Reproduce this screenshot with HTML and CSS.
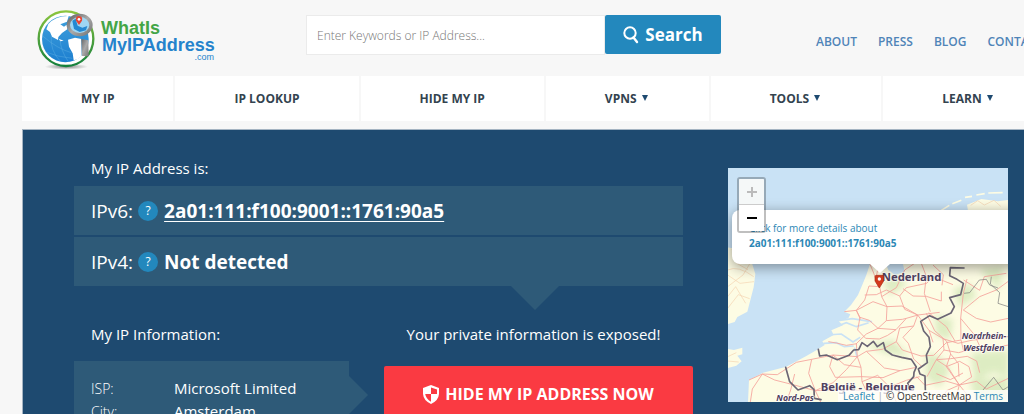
FILE: index.html
```html
<!DOCTYPE html>
<html lang="en">
<head>
<meta charset="utf-8">
<title>What Is My IP Address</title>
<link rel="stylesheet" href="styles.css">
</head>
<body>
<header class="top">
  <a class="logo" href="#" aria-label="WhatIsMyIPAddress.com">
    <svg class="logo-mark" viewBox="45 28 180 184" aria-hidden="true">
      <defs>
        <linearGradient id="ring" x1="0" y1="0" x2="0" y2="1"><stop offset="0" stop-color="#8bc53f"/><stop offset="1" stop-color="#15803c"/></linearGradient>
        <linearGradient id="sea" x1="0" y1="0" x2="0" y2="1"><stop offset="0" stop-color="#3fa0dc"/><stop offset="1" stop-color="#1d7fd0"/></linearGradient>
        <linearGradient id="steel" x1="0" y1="0" x2="1" y2="1"><stop offset="0" stop-color="#666"/><stop offset=".5" stop-color="#aaa"/><stop offset="1" stop-color="#777"/></linearGradient>
        <radialGradient id="shade"><stop offset="0" stop-color="#888"/><stop offset="1" stop-color="#888" stop-opacity="0"/></radialGradient>
      </defs>
      <ellipse cx="136" cy="203" rx="65" ry="9" fill="url(#shade)"/>
      <circle cx="135" cy="119" r="82" fill="#fff" stroke="url(#ring)" stroke-width="7"/>
      <circle cx="133" cy="120" r="70" fill="url(#sea)"/>
      <path d="M82 75Q105 50 143 51L138 68 118 76 129 83 137 77 139 91 123 102 112 114 111 123 93 113 87 99 76 91Z" fill="#fff"/>
      <path d="M113 119L128 125 118 127ZM141 122L162 116 181 120 182 171 170 181 158 184 155 163 144 143Z" fill="#fff"/>
      <g fill="none" stroke="#6fbcea" stroke-width="1"><path d="M65 111Q110 150 151 161M74 159Q110 174 154 178M91 109Q86 155 119 188M117 120Q119 155 142 188"/></g>
      <path d="M181 120L202 124 203 172 183 171Z" fill="url(#steel)"/>
      <ellipse cx="176" cy="78" rx="34" ry="29" fill="#9ed7f4" stroke="url(#steel)" stroke-width="10"/>
      <path d="M154 65L164 59 170 80 184 86 199 81 195 94 176 99 159 90Z" fill="#2489d2"/>
      <path d="M174 78L165 65Q162 51 174 51 186 52 183 65Z" fill="#e44736"/>
      <circle cx="174" cy="61" r="4" fill="#fff"/>
    </svg>
    <span class="logo-words">
      <span class="logo-green">WhatIs</span>
      <span class="logo-blue">MyIPAddress</span>
      <span class="logo-com">.com</span>
    </span>
  </a>
  <form class="search">
    <input class="search-box" type="text" aria-label="Keywords or IP address" placeholder="Enter Keywords or IP Address...">
    <button class="search-btn" type="button">
      <svg class="search-icon" viewBox="0 0 16 18" aria-hidden="true"><circle cx="7" cy="7" r="5.7" fill="none" stroke="currentColor" stroke-width="2"/><path d="M10.5 11.5L14 16" stroke="currentColor" stroke-width="2.4" stroke-linecap="round"/></svg>Search</button>
  </form>
  <nav class="links" aria-label="Site">
    <a href="#">ABOUT</a><a href="#">PRESS</a><a href="#">BLOG</a><a href="#">CONTACT</a>
  </nav>
</header>
<nav class="menu" aria-label="Main">
  <a href="#">MY IP</a>
  <a href="#">IP LOOKUP</a>
  <a href="#">HIDE MY IP</a>
  <a href="#">VPNS <svg class="caret" viewBox="0 0 6 6" aria-hidden="true"><path d="M0 0H6L3 6Z"/></svg></a>
  <a href="#">TOOLS <svg class="caret" viewBox="0 0 6 6" aria-hidden="true"><path d="M0 0H6L3 6Z"/></svg></a>
  <a href="#">LEARN <svg class="caret" viewBox="0 0 6 6" aria-hidden="true"><path d="M0 0H6L3 6Z"/></svg></a>
</nav>
<main class="hero">
  <section class="details">
    <h1 class="label">My IP Address is:</h1>
    <div class="addresses">
      <div class="address"><span>IPv6:</span><button class="help" type="button" aria-label="About IPv6">?</button><a class="value" href="#">2a01:111:f100:9001::1761:90a5</a></div>
      <div class="address"><span>IPv4:</span><button class="help" type="button" aria-label="About IPv4">?</button><span class="value">Not detected</span></div>
    </div>
    <div class="lower">
      <div class="info">
        <h2 class="label">My IP Information:</h2>
        <dl class="facts">
          <dt>ISP:</dt><dd>Microsoft Limited</dd>
          <dt>City:</dt><dd>Amsterdam</dd>
        </dl>
      </div>
      <div class="exposed">
        <p class="label">Your private information is exposed!</p>
        <a class="hide-btn" href="#"><svg class="shield" viewBox="0 0 16 19" aria-hidden="true"><path d="M8 0L16 3V9Q15.500 15.500 8 19 .5 15.500 0 9V3Z" fill="currentColor"/><path d="M8 2.500L14 4.500V9H8ZM8 9V16.700Q3 14 2.200 9Z" fill="#fa3a42"/></svg>HIDE MY IP ADDRESS NOW</a>
      </div>
    </div>
  </section>
  <aside class="map">
    <svg class="map-art" viewBox="24 24 842 702" preserveAspectRatio="xMidYMid slice" role="img" aria-label="Map of the Netherlands and Belgium">
      <defs><filter id="soft"><feGaussianBlur stdDeviation="9"/></filter>
      <clipPath id="land"><path id="coast" d="M455 300L440 345 428 374 415 405 394 435 374 455 392 463 386 475 357 484 370 496 335 511 342 525 308 544 315 555 295 568 260 588 200 620 130 638 88 660 85 726H866V120L835 124 785 117 742 134 745 152 720 310Z"/></clipPath></defs>
      <path fill="#c9e2f5" d="M0 0H900V750H0Z"/>
      <path fill="#fdfce4" d="M24 262L60 268 91 290 107 342 102 382 83 455 53 471 45 486 24 492ZM24 567L43 570 68 563 68 583 53 587 66 604 50 617 24 624Z"/>
      <use href="#coast" fill="#fdfce4"/>
      <g clip-path="url(#land)">
        <g fill="#d5e8ba" filter="url(#soft)" opacity=".8"><path d="M490 365L540 345 560 375 510 405ZM645 465L700 480 690 540 650 525ZM700 390L752 370 770 410 720 440ZM755 580L866 570V650L820 637 765 665ZM620 580L660 590 690 630 660 680 620 655ZM440 555L520 540 570 590 500 580ZM750 660L866 650V726H770ZM780 330L850 320 840 390Z"/></g>
      </g>
      <path d="M498 310L550 312 555 335 526 345 506 330Z" fill="#c9e2f5"/>
      <g fill="none" stroke="#c9e2f5" stroke-width="5" stroke-linecap="round"><path d="M340 503L380 488 410 500 445 489M320 525L365 522 400 546 420 533M313 550L350 548 374 560 400 558M355 482L398 476 455 485M405 565L412 590"/></g>
      <g fill="none" stroke="#fdfce4" stroke-width="5"><path d="M665 151L689 136M698 131L725 121M736 112L757 109M770 105L795 101M806 99L849 98"/></g>
      <g fill="none" stroke="#f5d3b0" stroke-width="2"><path d="M24 330Q55 315 102 350M24 345L61 370 103 365M24 380L70 345 91 310M24 410L48 380 78 430M24 445L56 404 90 416M37 267L51 310 85 329M24 590L50 578M24 603L57 606M753 136L774 122 794 135 823 121 843 139"/></g>
      <g fill="none" stroke="#f4a49c" stroke-width="2.600" stroke-linejoin="round"><path d="M477 313L470 350 480 380 486 410 502 440 500 482 475 505 440 522 410 551 413 590 424 622 427 665 440 693M480 380L448 378 435 420 410 451 421 472 449 481 475 505 529 509 560 475 595 465 660 457M435 405L470 404 500 390 540 408 560 383 621 370 640 350 700 374M540 408L555 448 594 465 582 498 540 504 530 545 548 570M502 440L547 438 594 465 628 511 640 547M486 410L530 383 555 330 585 310M550 386L580 408 620 409 665 423 665 395M582 498L550 532 566 550 582 597 607 620M410 451L460 425 502 440M421 472L414 510 438 535 479 537 504 526 529 509M530 545L488 568 440 574 413 590M450 310L462 339 475 378M500 482L548 478 560 475M605 310L620 349 614 400 632 455M374 455L410 451 422 478M326 545L350 549 380 556 412 551"/>
        <path d="M88 660L128 642 173 644 230 607 276 598 340 585 413 590M128 642L165 660 216 673 287 692 360 688 440 693 510 681 560 661 600 650M92 726L98 687 128 642M276 598L267 640 287 692 303 726M340 585L330 620 347 652 427 650 490 653 541 632 590 622M424 622L374 614 340 585M440 574L494 624 541 632M287 692L340 668 380 629 413 590M200 726L213 690 225 642M427 665L474 646 510 681 530 726M591 650L616 676 678 663 719 675 760 726M548 570L604 588 642 586 680 548 724 540M620 460L645 512 681 544 693 582 716 610 718 650M628 511L670 536 673 570 650 599 622 650M670 536L715 550 760 540 866 530M673 570L717 578 764 565 795 570 866 555M650 599L693 596 743 589 771 603 780 638M693 582L680 620 719 675M680 620L720 604 748 620 756 651 719 675M650 599L685 622 719 675 710 710 750 726M719 675L771 664 800 687 866 655M732 574L724 540 723 475 731 400 742 357M732 360L780 391 794 350 860 340M731 450L780 410 830 390 866 364M731 450L770 475 813 486 866 475M723 475L764 524 781 560M650 641L692 659 730 639M627 458L680 500 706 543M640 315L671 344 667 376M660 726L681 692 719 675"/></g>
      <g fill="none" stroke="#6b6574" stroke-width="5" stroke-linejoin="round" stroke-linecap="round"><path d="M733 324L692 323 690 347 712 358 731 370 723 404 690 413 704 440 694 459 654 478 630 467 603 484 612 513 628 532 632 560 620 585 623 608 596 627 601 642 616 648 617 690M296 568L300 588 320 585 353 599 388 586 402 570 417 569 427 548 443 559 461 544 473 560 491 548 497 570 518 585 546 592 575 598 590 621 583 637 582 650 564 670 570 687M198 622L210 665 235 690 270 677 283 689 284 715 304 719"/></g>
      <g fill="none" stroke="#777" stroke-width="2"><path d="M733 400L750 398 779 360 800 358 810 375 835 384M815 350L812 372 840 398 835 430 866 440M790 690L822 652 850 690 866 680"/></g>
      <g class="map-name"><text x="486" y="363" class="country">Nederland</text><text x="303" y="692" class="country">België - Belgique</text><text x="726" y="537" class="region">Nordrhein-</text><text x="731" y="573" class="region">Westfalen</text><text x="170" y="723" class="region">Nord-Pas</text></g>
      <path d="M479 384L466 363V350Q466 346 471 346H487Q492 346 492 350V363Z" fill="#d53b1e" stroke="#a82b13" stroke-width="2"/><circle cx="479" cy="357" r="5" fill="#fff"/>
    </svg>
    <a class="popup" href="#">Click for more details about<strong>2a01:111:f100:9001::1761:90a5</strong></a>
    <div class="zoom"><button class="zoom-in" type="button" aria-label="Zoom in" disabled><svg viewBox="0 0 12 12" aria-hidden="true"><path d="M6 1V11M1 6H11"/></svg></button><button type="button" aria-label="Zoom out"><svg viewBox="0 0 12 12" aria-hidden="true"><path d="M1 6H11"/></svg></button></div>
    <div class="credit"><a href="#">Leaflet</a><span class="bar">|</span>© OpenStreetMap <a href="#">Terms</a></div>
  </aside>
</main>
</body>
</html>
```
FILE: styles.css
```css
* { box-sizing: border-box; }
body { margin: 0; background: #f7f7f7; font-family: "Open Sans", "Noto Sans", sans-serif; overflow: hidden; }
a { text-decoration: none; color: inherit; }
button { font-family: inherit; border: 0; padding: 0; }
.top { display: flex; align-items: flex-start; padding: 8px 0 0 36px; height: 76px; white-space: nowrap; }
.logo { display: flex; flex: none; width: 270px; }
.logo-mark { width: 60px; height: 62px; flex: none; }
.logo-words { display: grid; width: 120px; padding: 12px 0 0 5px; font-family: "Liberation Sans", Arial, sans-serif; font-weight: bold; line-height: 17px; align-content: start; }
.logo-green { font-size: 18px; color: #43a546; }
.logo-blue { font-size: 18px; color: #2583cc; padding-left: 1px; }
.logo-com { font-size: 9px; line-height: 6px; font-weight: normal; color: #2583cc; text-align: right; padding-right: 2px; }
.search { display: flex; width: 415px; margin-top: 7px; height: 40px; flex: none; }
.search-box { flex: 1; min-width: 0; border: 1px solid #ebebeb; background: #fff; padding: 0 10px; font: 300 12px "Open Sans", sans-serif; color: #333; }
.search-box::placeholder { color: #777; opacity: 1; }
.search-btn { width: 116px; height: 39px; background: #2388bd; color: #fff; border-radius: 2px; font-size: 17px; font-weight: 700; display: flex; align-items: center; justify-content: center; gap: 6px; }
.search-icon { width: 16px; height: 18px; }
.links { display: flex; gap: 21px; padding-left: 95px; margin-top: 26px; font-size: 12px; line-height: 16px; font-weight: 600; color: #4f84b8; }
.menu { display: flex; gap: 2px; margin-left: 22px; white-space: nowrap; }
.menu a { flex: none; background: #fff; padding: 0 59px; height: 45px; line-height: 45px; font-size: 12px; font-weight: 700; color: #33434f; }
.caret { width: 6px; height: 6px; margin: 0 2px; vertical-align: 2px; fill: #1e4a70; }
.hero { display: flex; gap: 45px; margin: 8px 0 0 22px; padding: 28px 16px 24px 51px; background: #1e4a70; border: 1px solid #a5b4c2; border-width: 1px 0 0 1px; color: #fff; }
.details { flex: 1; min-width: 0; }
.label { margin: 0; font-size: 15px; line-height: 20px; font-weight: 400; }
.details > .label, .info .label { padding-left: 17px; }
.addresses { display: grid; gap: 2px; margin-top: 8px; position: relative; }
.addresses::after { content: ""; position: absolute; right: 124px; top: 100%; border: 24px solid transparent; border-top-color: #2e5a78; border-bottom: 0; }
.address { display: flex; align-items: center; height: 49px; padding: 0 17px; background: #2e5a78; font-size: 19px; }
.help { width: 20px; height: 20px; border-radius: 50%; background: #2388bd; color: #fff; font-size: 12px; line-height: 20px; margin: 0 6px 0 5px; }
.value { font-weight: 700; }
a.value { text-decoration: underline; text-decoration-thickness: 1px; text-underline-offset: 3px; }
.lower { display: flex; margin-top: 38px; }
.info { width: 275px; margin-right: 35px; }
.facts { position: relative; display: grid; grid-template-columns: 83px 1fr; margin: 17px 0 0; padding: 16px 17px; background: #2e5a78; font-size: 14px; line-height: 23px; }
.facts::after { content: ""; position: absolute; left: 100%; top: 15px; border: 19px solid transparent; border-left-color: #2e5a78; border-right: 0; }
.facts dt { font-weight: 300; }
.facts dd { margin: 0; font-size: 15px; font-weight: 500; }
.exposed { flex: 1; text-align: center; }
.hide-btn { display: flex; align-items: center; justify-content: center; gap: 6px; height: 56px; margin: 22px -10px 0 0; border-radius: 2px; background: #fa3a42; font-size: 16px; font-weight: 700; white-space: nowrap; }
.shield { width: 16px; height: 19px; }
.map { position: relative; width: 280px; height: 234px; flex: none; margin-top: 10px; overflow: hidden; color: #333; }
.map-art { display: block; width: 100%; height: 100%; }
.map-name { fill: #50415f; stroke: #fff; stroke-width: 5px; stroke-opacity: .7; paint-order: stroke; font-family: "Noto Sans", sans-serif; font-weight: 700; }
.country { font-size: 34px; }
.region { font-size: 26px; font-style: italic; }
.popup { position: absolute; left: 4px; top: 42px; width: 301px; height: 54px; padding: 11px 17px; background: #fff; border-radius: 8px; box-shadow: 0 3px 14px rgba(0, 0, 0, .4); font-size: 10px; line-height: 15px; color: #2b87b5; }
.popup strong { display: block; }
.popup::after { content: ""; position: absolute; left: 138px; top: 100%; border: 10px solid transparent; border-top: 9px solid #fff; border-bottom: 0; }
.zoom { position: absolute; left: 9px; top: 9px; width: 29px; border: 2px solid rgba(0, 0, 0, .25); border-radius: 3px; overflow: hidden; background-clip: padding-box; }
.zoom button { display: grid; place-items: center; width: 100%; height: 26px; background: #fff; color: #000; }
.zoom .zoom-in { background: #f5f8f8; color: #bbb; border-bottom: 1px solid #ccc; }
.zoom svg { width: 12px; height: 12px; fill: none; stroke: currentColor; stroke-width: 2; }
.credit { position: absolute; right: 0; bottom: 0; padding: 0 5px; background: rgba(255, 255, 255, .75); font-size: 10px; line-height: 12px; white-space: nowrap; }
.credit a { color: #2b87b5; }
.bar { color: #aaa; padding: 0 3px; }
```
